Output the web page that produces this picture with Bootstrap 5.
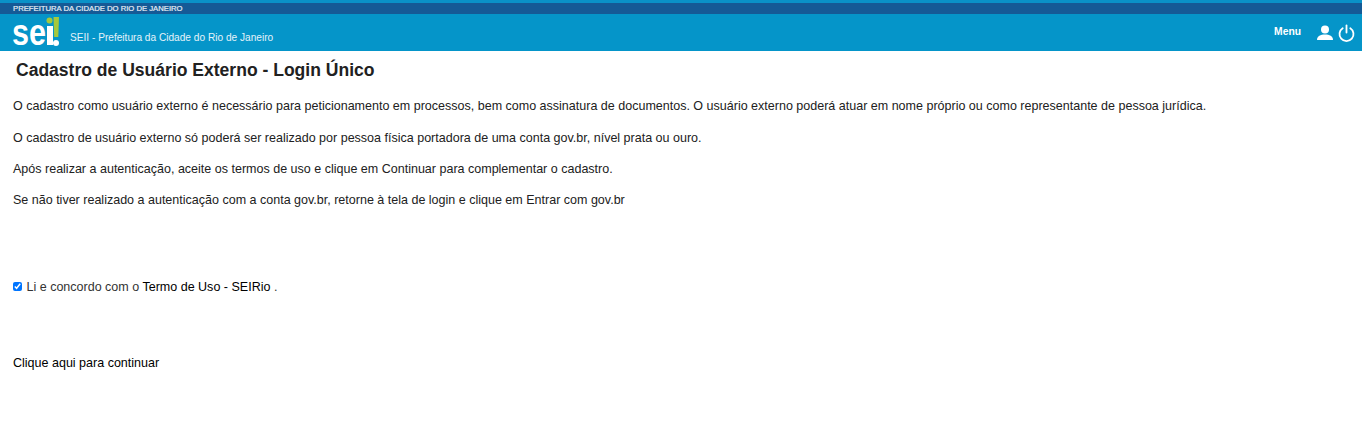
<!DOCTYPE html>
<html lang="pt-BR">
<head>
<meta charset="utf-8">
<title>Cadastro de Usuário Externo</title>
<link href="https://cdn.jsdelivr.net/npm/bootstrap@5.3.0/dist/css/bootstrap.min.css" rel="stylesheet">
<style>
html,body{height:429px;overflow:hidden}
body{font-family:"Liberation Sans",Arial,sans-serif;font-size:14px;color:#212121;background:#fff}
.top-strip{height:14px;background:#155a96;border-top:3px solid #0a92c8;color:#e8eef5;font-size:7.7px;line-height:12px;padding-left:13px;font-weight:400;-webkit-text-stroke:.2px #e8eef5}
.head-bar{height:37px;background:#0595c9;color:#fff;padding:0 7px 0 13px}
.logo-svg{display:block;margin-top:2px;overflow:visible}
.org-name{font-size:10.15px;line-height:12px;margin-left:10px;margin-top:18px;color:#e4f3fa}
.menu-label{font-size:10.3px;font-weight:700;margin-right:16px;margin-top:-1px}
.power-icon{margin-left:5px}
.page-title{font-size:17.55px;font-weight:700;line-height:22px;margin:8px 0 0 16px;color:#212121}
.main-text{padding:0 13px}
.main-text p{font-size:12.53px;line-height:15px;margin:0 0 16px}
.main-text .first-p{margin-top:18px;margin-bottom:17px}
.term-row{margin-top:72px;font-size:12.53px;line-height:15px;color:#333}
.term-row input{width:9px;height:9px;margin:0 1px 0 0;vertical-align:0;accent-color:#0075ff}
.term-row a,.go-link{color:#000;text-decoration:none}
.go-link{display:block;margin-top:61px;font-size:12.53px;line-height:15px}
</style>
</head>
<body>
<div class="top-strip">PREFEITURA DA CIDADE DO RIO DE JANEIRO</div>
<header class="head-bar d-flex align-items-start">
  <svg class="logo-svg" width="47" height="33" viewBox="0 0 47 33" role="img" aria-label="sei!">
    <text x="-1" y="29" font-family="Liberation Sans" font-weight="700" font-size="36" fill="#fff" textLength="34" lengthAdjust="spacingAndGlyphs">se</text>
    <rect x="34" y="10" width="6" height="19" fill="#fff"/>
    <circle cx="36.500" cy="4.500" r="3" fill="#a6c83c"/>
    <path d="M40.500 1h5.500l-.7 20h-4.100z" fill="#a6c83c"/>
    <circle cx="43" cy="27" r="3" fill="#fff"/>
  </svg>
  <span class="org-name">SEII - Prefeitura da Cidade do Rio de Janeiro</span>
  <div class="ms-auto d-flex align-items-center" style="height:37px">
    <span class="menu-label">Menu</span>
    <svg width="16" height="16" viewBox="0 0 16 16" fill="#fff" aria-hidden="true"><circle cx="8" cy="4.500" r="4"/><path d="M0 15c0-4 3.500-5.500 8-5.500s8 1.500 8 5.500z"/></svg>
    <svg class="power-icon" width="17" height="18" viewBox="0 0 17 18" fill="none" stroke="#fff" stroke-width="1.800" stroke-linecap="round" aria-hidden="true"><path d="M8.500 1.500v7"/><path d="M4.700 4.200a7 7 0 1 0 7.600 0"/></svg>
  </div>
</header>
<h1 class="page-title">Cadastro de Usuário Externo - Login Único</h1>
<main class="main-text">
  <p class="first-p">O cadastro como usuário externo é necessário para peticionamento em processos, bem como assinatura de documentos. O usuário externo poderá atuar em nome próprio ou como representante de pessoa jurídica.</p>
  <p>O cadastro de usuário externo só poderá ser realizado por pessoa física portadora de uma conta gov.br, nível prata ou ouro.</p>
  <p>Após realizar a autenticação, aceite os termos de uso e clique em Continuar para complementar o cadastro.</p>
  <p>Se não tiver realizado a autenticação com a conta gov.br, retorne à tela de login e clique em Entrar com gov.br</p>
  <div class="term-row"><input type="checkbox" checked> Li e concordo com o <a href="#">Termo de Uso - SEIRio</a> .</div>
  <a class="go-link" href="#">Clique aqui para continuar</a>
</main>
<script src="https://cdn.jsdelivr.net/npm/bootstrap@5.3.0/dist/js/bootstrap.bundle.min.js"></script>
</body>
</html>
